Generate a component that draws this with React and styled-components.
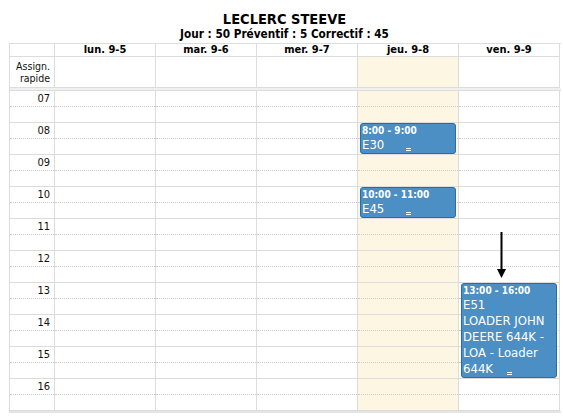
import React from "react";
import styled, { createGlobalStyle } from "styled-components";

const FONT = `"DejaVu Sans Condensed", "DejaVu Sans", Tahoma, sans-serif`;
const HOUR_H = 32;
const FIRST_HOUR = 7;
const LINE = "#dcdcdc";

const GlobalStyle = createGlobalStyle`
  html, body {
    margin: 0;
    padding: 0;
    background: #fff;
  }
  body {
    font-family: ${FONT};
    color: #000;
  }
`;

const Page = styled.div`
  width: 563px;
  height: 420px;
  padding-left: 9px;
  box-sizing: border-box;
  overflow: hidden;
`;

const Heading = styled.div`
  width: 551px;
  height: 43px;
  padding-top: 11px;
  box-sizing: border-box;
  display: flex;
  flex-direction: column;
  align-items: center;
`;

const Title = styled.div`
  font-size: 14.5px;
  font-weight: bold;
  line-height: 16px;
`;

const Subtitle = styled.div`
  font-size: 11.7px;
  font-weight: bold;
  line-height: 15px;
`;

const Calendar = styled.div`
  width: 551px;
  border-top: 1px solid ${LINE};
  border-left: 1px solid ${LINE};
  border-bottom: 2px solid #e4e4e4;
`;

const Row = styled.div`
  display: grid;
  grid-template-columns: 45px repeat(5, 101px);
`;

const HeaderCell = styled.div`
  height: 13px;
  box-sizing: border-box;
  border-right: 1px solid ${LINE};
  border-bottom: 1px solid ${LINE};
  font-size: 11px;
  font-weight: bold;
  line-height: 12px;
  text-align: center;
`;

const AssignCell = styled.div`
  height: 31px;
  box-sizing: border-box;
  border-right: 1px solid ${LINE};
  border-bottom: 1px solid ${LINE};
  background: ${(p) => (p.$today ? "#fcf6e3" : "#fff")};
`;

const AssignLabel = styled(AssignCell)`
  padding: 3px 4px 0 0;
  font-size: 10.5px;
  line-height: 12px;
  text-align: right;
  color: #111;
`;

const Separator = styled.div`
  height: 3px;
  box-sizing: border-box;
  background: #f0f0f0;
  border-bottom: 1px solid ${LINE};
`;

const Column = styled.div`
  position: relative;
  border-right: 1px solid ${LINE};
  background: ${(p) => (p.$today ? "#fcf6e3" : "transparent")};
`;

const HalfSlot = styled.div`
  height: 16px;
  box-sizing: border-box;
  border-bottom: 1px ${(p) => (p.$half ? "dotted #cbcbcb" : `solid ${LINE}`)};
`;

const HourLabel = styled(HalfSlot)`
  padding-right: 4px;
  font-size: 11px;
  line-height: 16px;
  text-align: right;
  color: #111;
`;

const Event = styled.div`
  position: absolute;
  left: 2px;
  right: 2px;
  box-sizing: border-box;
  padding: 0 1px;
  background: #4b8fc4;
  border: 1px solid #2b6ba6;
  border-radius: 3px;
  color: #fff;
  overflow: hidden;
`;

const EventTime = styled.div`
  font-size: 10px;
  font-weight: bold;
  line-height: 13px;
`;

const EventText = styled.div`
  font-size: 13px;
  line-height: 16px;
`;

const Handle = styled.span`
  position: absolute;
  left: 50%;
  bottom: 2px;
  width: 5px;
  height: 3px;
  margin-left: -2px;
  box-sizing: border-box;
  border-top: 1px solid #fff;
  border-bottom: 1px solid #fff;
`;

const Arrow = styled.svg`
  position: absolute;
  left: 38px;
  top: 141px;
`;

const days = [
  { label: "lun. 9-5" },
  { label: "mar. 9-6" },
  { label: "mer. 9-7" },
  { label: "jeu. 9-8", today: true },
  { label: "ven. 9-9", arrow: true },
];

const hours = ["07", "08", "09", "10", "11", "12", "13", "14", "15", "16"];

const events = [
  { day: 3, start: 8, end: 9, time: "8:00 - 9:00", text: ["E30"] },
  { day: 3, start: 10, end: 11, time: "10:00 - 11:00", text: ["E45"] },
  {
    day: 4,
    start: 13,
    end: 16,
    time: "13:00 - 16:00",
    text: ["E51", "LOADER JOHN DEERE 644K - LOA - Loader 644K"],
  },
];

function Slots() {
  return hours.map((h) => (
    <React.Fragment key={h}>
      <HalfSlot $half />
      <HalfSlot />
    </React.Fragment>
  ));
}

export default function App() {
  return (
    <>
      <GlobalStyle />
      <Page>
        <Heading>
          <Title>LECLERC STEEVE</Title>
          <Subtitle>Jour : 50 Préventif : 5 Correctif : 45</Subtitle>
        </Heading>
        <Calendar>
          <Row>
            <HeaderCell />
            {days.map((d) => (
              <HeaderCell key={d.label}>{d.label}</HeaderCell>
            ))}
          </Row>
          <Row>
            <AssignLabel>
              Assign.
              <br />
              rapide
            </AssignLabel>
            {days.map((d) => (
              <AssignCell key={d.label} $today={d.today} />
            ))}
          </Row>
          <Separator />
          <Row>
            <Column>
              {hours.map((h) => (
                <React.Fragment key={h}>
                  <HourLabel $half>{h}</HourLabel>
                  <HalfSlot />
                </React.Fragment>
              ))}
            </Column>
            {days.map((d, i) => (
              <Column key={d.label} $today={d.today}>
                <Slots />
                {events
                  .filter((e) => e.day === i)
                  .map((e) => (
                    <Event
                      key={e.time}
                      style={{
                        top: (e.start - FIRST_HOUR) * HOUR_H,
                        height: (e.end - e.start) * HOUR_H - 1,
                      }}
                    >
                      <EventTime>{e.time}</EventTime>
                      {e.text.map((t) => (
                        <EventText key={t}>{t}</EventText>
                      ))}
                      <Handle />
                    </Event>
                  ))}
                {d.arrow && (
                  <Arrow width="9" height="46" viewBox="0 0 9 46">
                    <rect x="3.5" y="0" width="2" height="38" fill="#000" />
                    <polygon points="0,37 9,37 4.5,46" fill="#000" />
                  </Arrow>
                )}
              </Column>
            ))}
          </Row>
        </Calendar>
      </Page>
    </>
  );
}
